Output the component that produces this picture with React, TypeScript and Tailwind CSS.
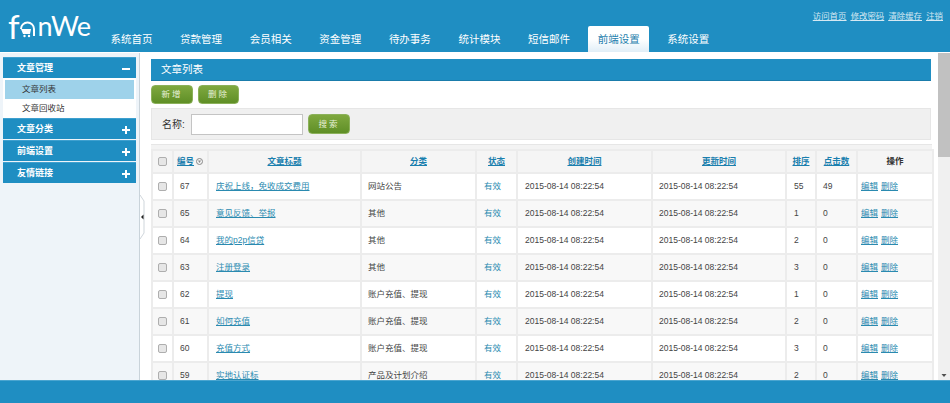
const cjk = "font-['Liberation_Sans','Noto_Sans_CJK_SC',sans-serif]";

const navItems = ["系统首页", "贷款管理", "会员相关", "资金管理", "待办事务", "统计模块", "短信邮件", "前端设置", "系统设置"];
const topLinks = ["访问首页", "修改密码", "清除缓存", "注销"];

const rows = [
  { id: 67, title: "庆祝上线，免收成交费用", cate: "网站公告", sort: 55, hits: 49 },
  { id: 65, title: "意见反馈、举报", cate: "其他", sort: 1, hits: 0 },
  { id: 64, title: "我的p2p信贷", cate: "其他", sort: 2, hits: 0 },
  { id: 63, title: "注册登录", cate: "其他", sort: 3, hits: 0 },
  { id: 62, title: "提现", cate: "账户充值、提现", sort: 1, hits: 0 },
  { id: 61, title: "如何充值", cate: "账户充值、提现", sort: 2, hits: 0 },
  { id: 60, title: "充值方式", cate: "账户充值、提现", sort: 3, hits: 0 },
  { id: 59, title: "实地认证标", cate: "产品及计划介绍", sort: 2, hits: 0 },
];

function Logo() {
  return (
    <div className="flex w-[101px] items-end pb-[9px] pl-[8px] font-['Lato',sans-serif] text-[27px] leading-[34px] font-normal text-white">
      <span className="text-[33px] leading-[34px]">f</span>
      <svg width="17" height="18" viewBox="0 0 17 18" className="mb-[5px] -ml-[1px] mr-[2px]">
        <path d="M2 9a6.5 6.5 0 0 1 13 0v7" fill="none" stroke="#fff" strokeWidth="2" />
        <path d="M2 9h10l-1 5H4z" fill="#fff" />
        <circle cx="5.5" cy="16" r="1.2" fill="#fff" />
        <circle cx="10" cy="16" r="1.2" fill="#fff" />
      </svg>
      <span className="tracking-[-0.5px]">nWe</span>
    </div>
  );
}

function Header() {
  return (
    <header className={`flex h-[52px] shrink-0 bg-[#1f8ec2] ${cjk}`}>
      <Logo />
      <div className="flex flex-1 flex-col">
        <div className="flex h-[26px] justify-end gap-[4.3px] pt-[10px] pr-[7px] text-[8.4px] leading-[12px] text-[#d5e8f2] underline">
          {topLinks.map((l) => (
            <a key={l}>{l}</a>
          ))}
        </div>
        <nav className="flex h-[26px] gap-[8.6px]">
          {navItems.map((n) =>
            n === "前端设置" ? (
              <a
                key={n}
                className="w-[61px] rounded-t-[2px] bg-gradient-to-b from-white from-50% to-[#e0eef7] text-center text-[10.5px] leading-[27px] text-[#1f7fae]"
              >
                {n}
              </a>
            ) : (
              <a key={n} className="w-[61px] text-center text-[10.5px] leading-[27px] text-white">
                {n}
              </a>
            ),
          )}
        </nav>
      </div>
    </header>
  );
}

function MenuHead({ label, open }: { label: string; open?: boolean }) {
  return (
    <div className="flex h-[21px] items-center justify-between border-t border-[#3ea0cf] bg-[#1f8ec2] pt-px pr-[6px] pl-[14px] text-[9px] font-bold text-white">
      <span>{label}</span>
      <span className="relative h-[8px] w-[8px]">
        <span className="absolute top-[3px] left-0 h-[2px] w-[8px] bg-white" />
        {!open && <span className="absolute top-0 left-[3px] h-[8px] w-[2px] bg-white" />}
      </span>
    </div>
  );
}

function Sidebar() {
  return (
    <aside className={`flex w-[140px] shrink-0 flex-col border-r border-[#c9d3da] bg-[#eef4f9] pt-[4px] pr-[3px] pl-[3px] ${cjk}`}>
      <MenuHead label="文章管理" open />
      <div className="bg-white px-[2px] pt-[2px] text-[8.5px] text-[#333]">
        <div className="h-[19px] bg-[#9ed2ea] pl-[17px] leading-[19px]">文章列表</div>
        <div className="h-[19px] pl-[17px] leading-[19px]">文章回收站</div>
      </div>
      <div className="flex flex-col gap-px">
        <MenuHead label="文章分类" />
        <MenuHead label="前端设置" />
        <MenuHead label="友情链接" />
      </div>
    </aside>
  );
}

function Splitter() {
  return (
    <div className="flex w-[10px] shrink-0 items-center bg-white">
      <svg width="6" height="44" viewBox="0 0 6 44">
        <path d="M0 0 L4 6 V38 L0 44" fill="#fff" stroke="#cfd6db" />
        <path d="M1 22 L3.5 19.5 V24.5 Z" fill="#222" />
      </svg>
    </div>
  );
}

function GreenButton({ label, className }: { label: string; className: string }) {
  return (
    <button
      className={`rounded-[4px] border border-[#8bb15a] bg-gradient-to-b from-[#7fa83f] to-[#5f8f26] text-[8.5px] tracking-[2px] text-[#e6f0d8] ${className}`}
    >
      {label}
    </button>
  );
}

function Check() {
  return (
    <input
      type="checkbox"
      className="block h-[9px] w-[9px] appearance-none rounded-[2px] border border-[#aeaeae] bg-[#e6e6e6]"
    />
  );
}

const th = "border-2 border-[#ececec] bg-[#f5f5f5] text-center font-bold text-[8.5px]";
const thLink = `${th} text-[#1a7fae] underline`;
const td = "border-2 border-[#ececec]";
const cell = `${td} text-[8.5px] text-[#444]`;
const link = `${td} text-[8.5px] text-[#2a8ab0]`;

function ArticleTable() {
  return (
    <table className="w-[781px] table-fixed border-collapse bg-white">
      <colgroup>
        <col className="w-[21px]" />
        <col className="w-[35px]" />
        <col className="w-[153px]" />
        <col className="w-[115px]" />
        <col className="w-[41px]" />
        <col className="w-[135px]" />
        <col className="w-[134px]" />
        <col className="w-[30px]" />
        <col className="w-[41px]" />
        <col className="w-[76px]" />
      </colgroup>
      <thead>
        <tr className="h-[23px]">
          <th className={th}>
            <div className="flex justify-center">
              <Check />
            </div>
          </th>
          <th className={`${th} pl-[3px] text-[#1a7fae]`}>
            <span className="flex items-center gap-[2px]">
              <span className="underline">编号</span>
              <svg width="7" height="7" viewBox="0 0 7 7">
                <circle cx="3.5" cy="3.5" r="3" fill="none" stroke="#888" />
                <path d="M2 2.5h3L3.5 5z" fill="#888" />
              </svg>
            </span>
          </th>
          <th className={thLink}>文章标题</th>
          <th className={thLink}>分类</th>
          <th className={thLink}>状态</th>
          <th className={thLink}>创建时间</th>
          <th className={thLink}>更新时间</th>
          <th className={thLink}>排序</th>
          <th className={thLink}>点击数</th>
          <th className={`${th} text-[#333]`}>操作</th>
        </tr>
      </thead>
      <tbody>
        {rows.map((r, i) => (
          <tr key={r.id} className={`h-[27px] ${i % 2 === 1 ? "bg-[#f8f8f8]" : "bg-white"}`}>
            <td className={td}>
              <div className="flex justify-center">
                <Check />
              </div>
            </td>
            <td className={`${cell} pl-[6px]`}>{r.id}</td>
            <td className={`${link} pl-[7px] underline`}>{r.title}</td>
            <td className={`${cell} pl-[6px]`}>{r.cate}</td>
            <td className={`${link} pl-[7px]`}>有效</td>
            <td className={`${cell} pl-[7px]`}>2015-08-14 08:22:54</td>
            <td className={`${cell} pl-[6px]`}>2015-08-14 08:22:54</td>
            <td className={`${cell} pl-[7px]`}>{r.sort}</td>
            <td className={`${cell} pl-[6px]`}>{r.hits}</td>
            <td className={`${link} pl-[3px] underline`}>
              <span className="flex gap-[3px]">
                <a>编辑</a>
                <a>删除</a>
              </span>
            </td>
          </tr>
        ))}
      </tbody>
    </table>
  );
}

function Scrollbar() {
  return (
    <div className="flex w-[12px] shrink-0 flex-col items-center justify-between bg-[#f0f0f0]">
      <div className="flex h-[10px] w-full flex-col items-center">
        <svg width="6" height="10" viewBox="0 0 6 10">
          <path d="M0.5 6 L3 3 L5.5 6 Z" fill="#a3a3a3" />
        </svg>
        <div className="h-[104px] w-[12px] shrink-0 bg-[#c1c1c1]" />
      </div>
      <svg width="6" height="10" viewBox="0 0 6 10">
        <path d="M0.5 4 L3 7 L5.5 4 Z" fill="#505050" />
      </svg>
    </div>
  );
}

export default function App() {
  return (
    <div className={`flex h-screen flex-col overflow-hidden bg-white ${cjk}`}>
      <Header />
      <div className="mt-px flex min-h-0 flex-1">
        <Sidebar />
        <Splitter />
        <main className="min-w-0 flex-1 overflow-hidden pt-[6px] pl-px">
          <div className="flex h-[22px] w-[780px] items-center border-b border-[#1a7cab] bg-[#1f8ec2] pl-[10px] text-[10.5px] text-white">
            文章列表
          </div>
          <div className="mt-[4px] flex gap-[5px]">
            <GreenButton label="新增" className="h-[19px] w-[42px]" />
            <GreenButton label="删除" className="h-[19px] w-[41px]" />
          </div>
          <div className="mt-[4px] flex h-[32px] w-[780px] items-center border border-[#e6e6e6] bg-[#f0f0f0] pl-[10px]">
            <span className="w-[29px] text-[10px] text-[#333]">名称:</span>
            <input className="h-[21px] w-[112px] border border-[#c4c4c4] bg-white" />
            <GreenButton label="搜索" className="ml-[5px] h-[20px] w-[42px]" />
          </div>
          <div className="mt-[4px] h-[5px] w-[781px] border-t border-[#e6e6e6] bg-[#f3f3f3]" />
          <ArticleTable />
        </main>
        <Scrollbar />
      </div>
      <footer className="h-[23px] shrink-0 border-t border-[#4aa5d0] bg-[#1f8ec2]" />
    </div>
  );
}
